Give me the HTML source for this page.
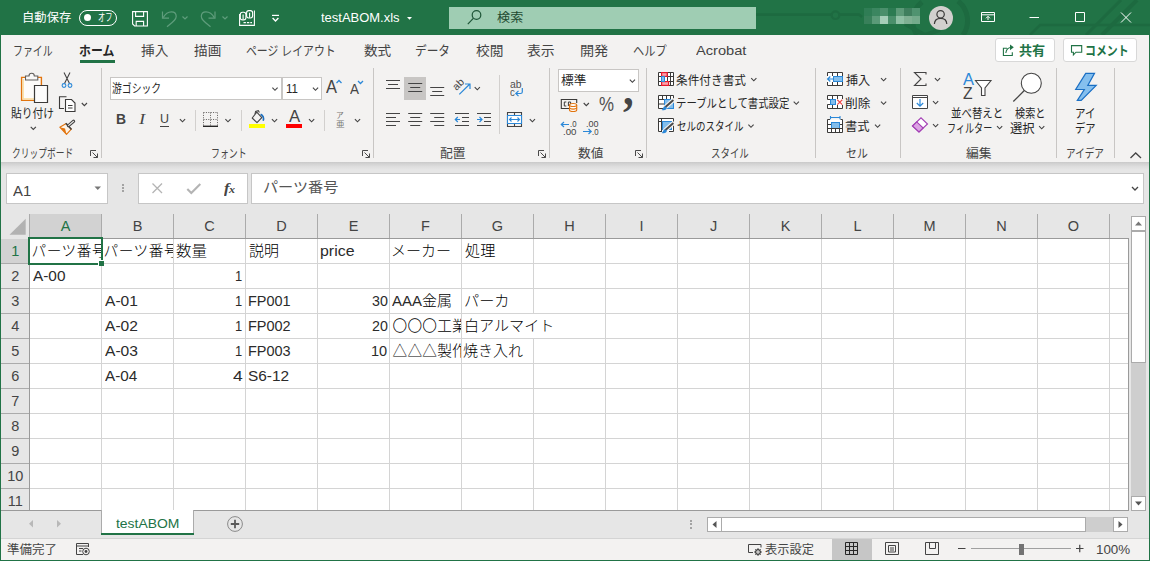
<!DOCTYPE html>
<html lang="ja"><head><meta charset="utf-8"><title>testABOM.xls - Excel</title><style>
*{margin:0;padding:0;box-sizing:border-box}
html,body{width:1150px;height:561px;overflow:hidden;background:#e6e6e6}
body{position:relative;font-family:"Liberation Sans","Noto Sans CJK JP",sans-serif;color:#262626}
.a{position:absolute}
.t{position:absolute;white-space:nowrap;transform-origin:0 50%;display:block}
svg{position:absolute;overflow:visible}
</style></head><body>
<div class="a" style="left:0px;top:0px;width:1150px;height:561px;background:#217346;"></div>
<div class="a" style="left:1px;top:35px;width:1148px;height:127px;background:#f3f2f1;"></div>
<div class="a" style="left:1px;top:162px;width:1148px;height:349px;background:#e6e6e6;"></div>
<div class="a" style="left:1px;top:162px;width:1148px;height:8px;background:linear-gradient(#c9c9c9,#d2d2d2 22%,#dddddd 55%,#e6e6e6)"></div>
<div class="a" style="left:1px;top:511px;width:1148px;height:27px;background:#e6e6e6;"></div>
<div class="a" style="left:1px;top:538px;width:1148px;height:1px;background:#d4d4d4;"></div>
<div class="a" style="left:1px;top:539px;width:1148px;height:21px;background:#f3f2f1;"></div>
<div class="a" style="left:0;top:0;width:1150px;height:35px;overflow:hidden">
<svg style="left:0px;top:0px" width="1150" height="35" viewBox="0 0 1150 35">
<g fill="none" stroke="#1d6a40" stroke-width="2.6">
<path d="M756 14.6 H831"/><circle cx="835.5" cy="15.2" r="3.8" stroke-width="2.2"/><path d="M840 14.6 H859 L862 17"/>
<path d="M917 35 A 25 25 0 0 1 922 2" stroke-width="5"/><path d="M958 1 A 25 25 0 0 1 963 35" stroke-width="5"/>
<path d="M905 24 L925 35 M925 35 L940 30" stroke-width="4"/>
<path d="M1030 35 L1040 25 H1150"/>
<path d="M1102 35 L1137 0" stroke-width="4"/>
<path d="M1086 35 L1121 0" stroke-width="3"/>
</g></svg>
</div>
<div class="a" style="left:449px;top:7px;width:307px;height:22px;background:#9fcdb3;"></div>
<svg style="left:0px;top:0px" width="1" height="1" viewBox="0 0 1 1"><circle cx="476.5" cy="15" r="4.3" fill="none" stroke="#1e5537" stroke-width="1.2"/><path d="M473.3 18.3 L467.8 24.2" stroke="#1e5537" stroke-width="1.2"/></svg>
<div class="a" style="left:79px;top:9.5px;width:38px;height:16px;border:1px solid #fff;border-radius:8px"></div>
<div class="a" style="left:83.5px;top:14px;width:7px;height:7px;border-radius:50%;background:#fff"></div>
<svg style="left:0px;top:0px" width="1" height="1" viewBox="0 0 1 1"><g fill="none" stroke="#fff" stroke-width="1.1"><path d="M132.6 11.6 H147.4 V26 H134.6 L132.6 24 Z"/><path d="M135.6 11.6 V16.4 H143.6 V11.6"/><path d="M136.2 26 V21.4 H143.6 V26"/></g></svg>
<svg style="left:0px;top:0px" width="1" height="1" viewBox="0 0 1 1"><g fill="none" stroke="#5f9d7c" stroke-width="1.2"><path d="M162.5 11.5 V18.2 H169"/><path d="M163.2 17.6 C165.5 13.5 169 11.9 171.5 11.9 C174.5 11.9 176.2 14 176.2 16.5 C176.2 19 174.5 20.5 167 26.8"/><path d="M182.5 16.5 L185 19 L187.5 16.5"/></g></svg>
<svg style="left:0px;top:0px" width="1" height="1" viewBox="0 0 1 1"><g fill="none" stroke="#5f9d7c" stroke-width="1.2"><path d="M215 11.5 V18.2 H208.5"/><path d="M214.3 17.6 C212 13.5 208.5 11.9 206 11.9 C203 11.9 201.3 14 201.3 16.5 C201.3 19 203 20.5 210.5 26.8"/><path d="M222.5 16.5 L225 19 L227.5 16.5"/></g></svg>
<svg style="left:0px;top:0px" width="1" height="1" viewBox="0 0 1 1"><g fill="none" stroke="#fff" stroke-width="1.1"><path d="M239.6 14 V25.4 H254.4 V10.5"/><path d="M243.5 22.6 H252" stroke-dasharray="2.4 1"/><rect x="240.3" y="12.3" width="5.6" height="7.6" rx="2.2"/><rect x="246.6" y="10.6" width="6" height="7.4" rx="2.2"/><path d="M243.1 14.5 V19.5 M249.6 12.8 V17.8"/></g></svg>
<svg style="left:0px;top:0px" width="1" height="1" viewBox="0 0 1 1"><path d="M272 15.4 H279" stroke="#fff" stroke-width="1.2"/><path d="M272.6 18 L275.5 20.9 L278.4 18" fill="none" stroke="#fff" stroke-width="1.4"/></svg>
<svg style="left:0px;top:0px" width="1" height="1" viewBox="0 0 1 1"><path d="M407 17 H412 L409.5 19.8 Z" fill="#fff"/></svg>
<div class="a" style="left:864px;top:8px;width:8px;height:8px;background:#2f7d55;"></div>
<div class="a" style="left:872px;top:8px;width:8px;height:8px;background:#3b8660;"></div>
<div class="a" style="left:880px;top:8px;width:8px;height:8px;background:#4a8f6b;"></div>
<div class="a" style="left:888px;top:8px;width:8px;height:8px;background:#2c7b52;"></div>
<div class="a" style="left:896px;top:8px;width:8px;height:8px;background:#5c9a78;"></div>
<div class="a" style="left:904px;top:8px;width:8px;height:8px;background:#3f7f5e;"></div>
<div class="a" style="left:912px;top:8px;width:8px;height:8px;background:#4f9370;"></div>
<div class="a" style="left:864px;top:16px;width:8px;height:8px;background:#38805a;"></div>
<div class="a" style="left:872px;top:16px;width:8px;height:8px;background:#5a9a78;"></div>
<div class="a" style="left:880px;top:16px;width:8px;height:8px;background:#a5ceb8;"></div>
<div class="a" style="left:888px;top:16px;width:8px;height:8px;background:#4a8f6b;"></div>
<div class="a" style="left:896px;top:16px;width:8px;height:8px;background:#8fc0a5;"></div>
<div class="a" style="left:904px;top:16px;width:8px;height:8px;background:#7fb093;"></div>
<div class="a" style="left:912px;top:16px;width:8px;height:8px;background:#74ab8c;"></div>
<div class="a" style="left:928.6px;top:5.5px;width:24px;height:24px;border-radius:50%;background:#d2d0ce"></div>
<svg style="left:0px;top:0px" width="1" height="1" viewBox="0 0 1 1"><g fill="none" stroke="#3b3a39" stroke-width="1.2"><circle cx="940.6" cy="14.3" r="3.7"/><path d="M934.4 24 C934.6 19.2 937.6 18.3 940.6 18.3 C943.6 18.3 946.6 19.2 946.8 24"/></g></svg>
<svg style="left:0px;top:0px" width="1" height="1" viewBox="0 0 1 1"><g fill="none" stroke="#fff" stroke-width="1"><path d="M981.5 12.5 H994.5 V21.5 H981.5 Z"/><path d="M981.5 14.8 H994.5"/><path d="M988 20 V16.5 M986 18.3 L988 16.3 L990 18.3"/></g></svg>
<svg style="left:0px;top:0px" width="1" height="1" viewBox="0 0 1 1"><g fill="none" stroke="#fff" stroke-width="1"><path d="M1029.5 17.5 H1039"/><path d="M1075.5 12.5 H1084.5 V21.5 H1075.5 Z"/><path d="M1121 12.5 L1131 22.5 M1131 12.5 L1121 22.5"/></g></svg>
<div class="a" style="left:80px;top:59.5px;width:35px;height:3px;background:#217346;"></div>
<div class="a" style="left:995px;top:38px;width:60px;height:24px;background:#fff;border:1px solid #d8d8d8;border-radius:3px"></div>
<div class="a" style="left:1063px;top:38px;width:74px;height:24px;background:#fff;border:1px solid #d8d8d8;border-radius:3px"></div>
<svg style="left:0px;top:0px" width="1" height="1" viewBox="0 0 1 1"><g fill="none" stroke="#217346" stroke-width="1.1"><path d="M1007 48.2 H1003.4 V55.5 H1012.3 V52.3"/><path d="M1005.8 53 C1006.3 49 1008.8 47.3 1012.3 47.3"/><path d="M1010 44.4 L1013.8 47.3 L1010 50.2 Z" fill="#217346" stroke="none"/></g></svg>
<svg style="left:0px;top:0px" width="1" height="1" viewBox="0 0 1 1"><path d="M1071.5 45.6 H1081.7 V52.2 H1076 L1073.4 54.9 V52.2 H1071.5 Z" fill="none" stroke="#217346" stroke-width="1.1"/></svg>
<div class="a" style="left:101.0px;top:68px;width:1px;height:90px;background:#c8c6c4;"></div>
<div class="a" style="left:373.0px;top:68px;width:1px;height:90px;background:#c8c6c4;"></div>
<div class="a" style="left:549.0px;top:68px;width:1px;height:90px;background:#c8c6c4;"></div>
<div class="a" style="left:646.0px;top:68px;width:1px;height:90px;background:#c8c6c4;"></div>
<div class="a" style="left:815.0px;top:68px;width:1px;height:90px;background:#c8c6c4;"></div>
<div class="a" style="left:900.0px;top:68px;width:1px;height:90px;background:#c8c6c4;"></div>
<div class="a" style="left:1056.0px;top:68px;width:1px;height:90px;background:#c8c6c4;"></div>
<div class="a" style="left:1114.0px;top:68px;width:1px;height:90px;background:#c8c6c4;"></div>
<div class="a" style="left:195.0px;top:110px;width:1px;height:21px;background:#d2d0ce;"></div>
<div class="a" style="left:240.5px;top:110px;width:1px;height:21px;background:#d2d0ce;"></div>
<div class="a" style="left:324.0px;top:110px;width:1px;height:21px;background:#d2d0ce;"></div>
<div class="a" style="left:499.0px;top:75px;width:1px;height:59px;background:#d2d0ce;"></div>
<svg style="left:0px;top:0px" width="1" height="1" viewBox="0 0 1 1"><g fill="none" stroke="#4a4a4a" stroke-width="1"><path d="M90.5 156.0 V150.5 H96"/><path d="M92.5 152.5 L97.5 157.5 M97.5 153.5 V157.5 H93.5"/></g></svg>
<svg style="left:0px;top:0px" width="1" height="1" viewBox="0 0 1 1"><g fill="none" stroke="#4a4a4a" stroke-width="1"><path d="M362.5 156.0 V150.5 H368"/><path d="M364.5 152.5 L369.5 157.5 M369.5 153.5 V157.5 H365.5"/></g></svg>
<svg style="left:0px;top:0px" width="1" height="1" viewBox="0 0 1 1"><g fill="none" stroke="#4a4a4a" stroke-width="1"><path d="M538.5 156.0 V150.5 H544"/><path d="M540.5 152.5 L545.5 157.5 M545.5 153.5 V157.5 H541.5"/></g></svg>
<svg style="left:0px;top:0px" width="1" height="1" viewBox="0 0 1 1"><g fill="none" stroke="#4a4a4a" stroke-width="1"><path d="M635.5 156.0 V150.5 H641"/><path d="M637.5 152.5 L642.5 157.5 M642.5 153.5 V157.5 H638.5"/></g></svg>
<svg style="left:0px;top:0px" width="1" height="1" viewBox="0 0 1 1"><path d="M1130.5 158 L1135.7 153 L1141 158" fill="none" stroke="#444" stroke-width="1.3"/></svg>
<svg style="left:0px;top:0px" width="1" height="1" viewBox="0 0 1 1"><g fill="none" stroke-width="1.2">
<path d="M21.6 77.4 H41.4 V100.4 H21.6 Z" stroke="#e2740e" fill="#fdfcfa" stroke-width="1.4"/>
<path d="M23.2 79 V98.9 H34" stroke="#fbdc9a" stroke-width="1.2"/>
<path d="M25.5 80 V76 H29 C29 72.3 34.3 72.3 34.3 76 H37.8 V80 Z" stroke="#605e5c" fill="#f8f8f8" stroke-width="1.1"/>
<path d="M34.5 85.5 H47.5 V102.5 H34.5 Z" stroke="#3b3a39" fill="#fcfcfc"/></g></svg>
<svg style="left:0px;top:0px" width="1" height="1" viewBox="0 0 1 1"><path d="M30.699999999999996 126.89999999999999 L33.3 129.5 L35.9 126.89999999999999" fill="none" stroke="#444" stroke-width="1.15"/></svg>
<svg style="left:0px;top:0px" width="1" height="1" viewBox="0 0 1 1"><g fill="none" stroke-width="1.1"><path d="M64 72.5 L69.5 83.5 M70 72.5 L64.5 83.5" stroke="#444"/>
<circle cx="64" cy="85.5" r="1.9" stroke="#2b88d8"/><circle cx="70" cy="85.5" r="1.9" stroke="#2b88d8"/></g></svg>
<svg style="left:0px;top:0px" width="1" height="1" viewBox="0 0 1 1"><g fill="none" stroke="#3b3a39" stroke-width="1.1"><path d="M64 108.5 H59.5 V96.8 H66.5"/>
<path d="M65.5 99.5 H71.5 L75 103 V111.5 H65.5 Z" fill="#fff"/><path d="M68 105.5 H72.5 M68 108 H72.5"/></g></svg>
<svg style="left:0px;top:0px" width="1" height="1" viewBox="0 0 1 1"><path d="M81.80000000000001 103.0 L84.4 105.6 L87.00000000000001 103.0" fill="none" stroke="#444" stroke-width="1.15"/></svg>
<svg style="left:0px;top:0px" width="1" height="1" viewBox="0 0 1 1"><g fill="none" stroke-width="1.1"><path d="M59.8 127.2 L66.2 123.5 L71.3 129.2 L66.5 134.3 Z" stroke="#e2740e" fill="#fdf3e6" stroke-linejoin="round"/>
<path d="M59.8 127.2 L66.5 134.3 L65 128.5 Z" fill="#e2740e"/>
<path d="M65.8 123.2 L71.5 129.5" stroke="#444" stroke-width="1.6"/>
<path d="M68.5 125.6 L73.6 121.2" stroke="#444" stroke-width="3.2" stroke-linecap="round"/><path d="M68.7 125.4 L73.4 121.4" stroke="#f3f2f1" stroke-width="1.2" stroke-linecap="round"/></g></svg>
<div class="a" style="left:110px;top:77px;width:172px;height:23px;background:#fff;border:1px solid #c8c6c4"></div>
<div class="a" style="left:282px;top:77px;width:40px;height:23px;background:#fff;border:1px solid #c8c6c4;border-left:1px solid #c8c6c4"></div>
<svg style="left:0px;top:0px" width="1" height="1" viewBox="0 0 1 1"><path d="M272.4 87.7 L275 90.3 L277.59999999999997 87.7" fill="none" stroke="#444" stroke-width="1.15"/></svg>
<svg style="left:0px;top:0px" width="1" height="1" viewBox="0 0 1 1"><path d="M312.9 87.7 L315.5 90.3 L318.09999999999997 87.7" fill="none" stroke="#444" stroke-width="1.15"/></svg>
<svg style="left:0px;top:0px" width="1" height="1" viewBox="0 0 1 1"><path d="M336.5 83 L339 80.5 L341.5 83" fill="none" stroke="#2b88d8" stroke-width="1.3"/></svg>
<svg style="left:0px;top:0px" width="1" height="1" viewBox="0 0 1 1"><path d="M358 81 L360.5 83.5 L363 81" fill="none" stroke="#2b88d8" stroke-width="1.3"/></svg>
<div class="a" style="left:160px;top:125.5px;width:9px;height:1px;background:#444;"></div>
<svg style="left:0px;top:0px" width="1" height="1" viewBox="0 0 1 1"><path d="M179.9 119.2 L182.5 121.8 L185.1 119.2" fill="none" stroke="#444" stroke-width="1.15"/></svg>
<svg style="left:0px;top:0px" width="1" height="1" viewBox="0 0 1 1"><g fill="none" stroke="#605e5c" stroke-width="1" stroke-dasharray="1 1.4"><path d="M203.5 112.5 H217.5 M203.5 112.5 V126 M217.5 112.5 V126 M210.5 112.5 V126 M203.5 119.5 H217.5"/></g>
<path d="M203 126.3 H218" stroke="#262626" stroke-width="1.4"/></svg>
<svg style="left:0px;top:0px" width="1" height="1" viewBox="0 0 1 1"><path d="M225.4 119.2 L228 121.8 L230.6 119.2" fill="none" stroke="#444" stroke-width="1.15"/></svg>
<svg style="left:0px;top:0px" width="1" height="1" viewBox="0 0 1 1"><g fill="none" stroke="#444" stroke-width="1.1"><path d="M256.8 112.2 L261.8 117.6 L257 122.6 L252.2 118 Z" stroke-linejoin="round"/><path d="M255 114 L255.6 111.4 L258.3 110.6 L259.4 112.6"/></g>
<path d="M260.6 114.3 C263.2 115.6 264 118 263.2 120.8" fill="none" stroke="#1e6fbd" stroke-width="1.6"/></svg>
<div class="a" style="left:249px;top:124px;width:16px;height:4px;background:#ffff00;"></div>
<svg style="left:0px;top:0px" width="1" height="1" viewBox="0 0 1 1"><path d="M271.9 119.2 L274.5 121.8 L277.09999999999997 119.2" fill="none" stroke="#444" stroke-width="1.15"/></svg>
<div class="a" style="left:286px;top:124px;width:16px;height:4px;background:#ff0000;"></div>
<svg style="left:0px;top:0px" width="1" height="1" viewBox="0 0 1 1"><path d="M309.0 119.2 L311.6 121.8 L314.2 119.2" fill="none" stroke="#444" stroke-width="1.15"/></svg>
<svg style="left:0px;top:0px" width="1" height="1" viewBox="0 0 1 1"><path d="M354.9 119.2 L357.5 121.8 L360.09999999999997 119.2" fill="none" stroke="#444" stroke-width="1.15"/></svg>
<div class="a" style="left:404px;top:77px;width:22px;height:23px;background:#c8c6c4;"></div>
<svg style="left:0px;top:0px" width="1" height="1" viewBox="0 0 1 1"><path d="M386.0 80.5 H400.0 M388.0 84.5 H398.0 M386.0 88.5 H400.0 " stroke="#444" stroke-width="1.1" fill="none"/></svg>
<svg style="left:0px;top:0px" width="1" height="1" viewBox="0 0 1 1"><path d="M408.2 83.5 H422.2 M410.2 87.5 H420.2 M408.2 91.5 H422.2 " stroke="#444" stroke-width="1.1" fill="none"/></svg>
<svg style="left:0px;top:0px" width="1" height="1" viewBox="0 0 1 1"><path d="M430.2 87.5 H444.2 M432.2 91.5 H442.2 M430.2 95.5 H444.2 " stroke="#444" stroke-width="1.1" fill="none"/></svg>
<svg style="left:0px;top:0px" width="1" height="1" viewBox="0 0 1 1"><path d="M386 113.5 H400 M386 117.5 H396 M386 121.5 H400 M386 125.5 H396 " stroke="#444" stroke-width="1.1" fill="none"/></svg>
<svg style="left:0px;top:0px" width="1" height="1" viewBox="0 0 1 1"><path d="M408.2 113.5 H422.2 M410.2 117.5 H420.2 M408.2 121.5 H422.2 M410.2 125.5 H420.2 " stroke="#444" stroke-width="1.1" fill="none"/></svg>
<svg style="left:0px;top:0px" width="1" height="1" viewBox="0 0 1 1"><path d="M430.2 113.5 H444.2 M434.2 117.5 H444.2 M430.2 121.5 H444.2 M434.2 125.5 H444.2 " stroke="#444" stroke-width="1.1" fill="none"/></svg>
<span class="a" style="white-space:nowrap;left:451.9px;top:77.8px;font-size:10.5px;line-height:12px;color:#444;transform:rotate(-45deg);transform-origin:50% 50%">ab</span>
<svg style="left:0px;top:0px" width="1" height="1" viewBox="0 0 1 1"><path d="M459.3 94.4 L469.6 84.3 M465 84 H470 V89" fill="none" stroke="#2b88d8" stroke-width="1.2"/></svg>
<svg style="left:0px;top:0px" width="1" height="1" viewBox="0 0 1 1"><path d="M474.7 87.2 L477.3 89.8 L479.9 87.2" fill="none" stroke="#444" stroke-width="1.15"/></svg>
<svg style="left:0px;top:0px" width="1" height="1" viewBox="0 0 1 1"><path d="M522.3 88 V92 C522.3 93 521.5 93.5 520.5 93.5 H516 M518.5 90.8 L515.8 93.5 L518.5 96.2" fill="none" stroke="#2b88d8" stroke-width="1.2"/></svg>
<svg style="left:0px;top:0px" width="1" height="1" viewBox="0 0 1 1"><path d="M455 113.5 H469 M462 117.5 H469 M462 121.5 H469 M455 125.5 H469" stroke="#444" stroke-width="1.1" fill="none"/>
<path d="M460 119.5 H455.5 M457.8 117 L455.3 119.5 L457.8 122" stroke="#2b88d8" stroke-width="1.2" fill="none"/></svg>
<svg style="left:0px;top:0px" width="1" height="1" viewBox="0 0 1 1"><path d="M477 113.5 H491 M484 117.5 H491 M484 121.5 H491 M477 125.5 H491" stroke="#444" stroke-width="1.1" fill="none"/>
<path d="M477 119.5 H481.8 M479.5 117 L482 119.5 L479.5 122" stroke="#2b88d8" stroke-width="1.2" fill="none"/></svg>
<svg style="left:0px;top:0px" width="1" height="1" viewBox="0 0 1 1"><g fill="none" stroke-width="1.1"><path d="M507.5 112.5 H521.5 V126.5 H507.5 Z M507.5 115.5 H521.5 M507.5 123.5 H521.5 M514.5 112.5 V115.5 M514.5 123.5 V126.5" stroke="#444"/>
<path d="M507.5 115.5 H521.5 V123.5 H507.5 Z" stroke="#2b88d8" fill="#fff"/>
<path d="M509.5 119.5 H519.5 M511.5 117.5 L509.5 119.5 L511.5 121.5 M517.5 117.5 L519.5 119.5 L517.5 121.5" stroke="#2b88d8"/></g></svg>
<svg style="left:0px;top:0px" width="1" height="1" viewBox="0 0 1 1"><path d="M529.8 119.2 L532.4 121.8 L535.0 119.2" fill="none" stroke="#444" stroke-width="1.15"/></svg>
<div class="a" style="left:558px;top:69px;width:81px;height:23px;background:#fff;border:1px solid #c8c6c4"></div>
<svg style="left:0px;top:0px" width="1" height="1" viewBox="0 0 1 1"><path d="M629.8 79.7 L632.4 82.3 L635.0 79.7" fill="none" stroke="#444" stroke-width="1.15"/></svg>
<svg style="left:0px;top:0px" width="1" height="1" viewBox="0 0 1 1"><g fill="none" stroke-width="1.1"><path d="M569 108.5 H561.3 V99.5 H576.7 V103" stroke="#3b3a39"/>
<path d="M566.3 102 H564.3 V106 H566.3 M570.6 106 V102 H568.4 V106" stroke="#3b3a39" stroke-width="1"/>
<path d="M569.5 105 C569.5 103 576.7 103 576.7 105 V110 C576.7 112 569.5 112 569.5 110 Z" stroke="#e2740e" fill="#fff"/>
<path d="M569.5 105 C569.5 107 576.7 107 576.7 105 M569.5 107.6 C569.5 109.6 576.7 109.6 576.7 107.6" stroke="#e2740e"/></g></svg>
<svg style="left:0px;top:0px" width="1" height="1" viewBox="0 0 1 1"><path d="M583.6999999999999 103.0 L586.3 105.6 L588.9 103.0" fill="none" stroke="#444" stroke-width="1.15"/></svg>
<svg style="left:0px;top:0px" width="1" height="1" viewBox="0 0 1 1"><path d="M569 124.5 H561.5 M564 122 L561.3 124.5 L564 127" fill="none" stroke="#2b88d8" stroke-width="1.2"/></svg>
<svg style="left:0px;top:0px" width="1" height="1" viewBox="0 0 1 1"><path d="M583 131.5 H591 M588.5 129 L591.2 131.5 L588.5 134" fill="none" stroke="#2b88d8" stroke-width="1.2"/></svg>
<svg style="left:0px;top:0px" width="1" height="1" viewBox="0 0 1 1"><rect x="658.5" y="72.5" width="15" height="13" fill="#fff"/>
<g fill="none" stroke="#3b3a39" stroke-width="1"><path d="M658.5 72.5 H673.5 V85.5 H658.5 Z M661.5 72.5 V85.5 M658.5 76.5 H673.5 M658.5 81.5 H673.5 M667.5 72.5 V85.5 M670.5 72.5 V85.5"/></g>
<rect x="661.6" y="72.6" width="5.6" height="3.8" fill="#f9a3ab" stroke="#e8192c" stroke-width="1.2"/><rect x="661.6" y="81.6" width="7" height="3.8" fill="#f9a3ab" stroke="#e8192c" stroke-width="1.2"/>
<rect x="661.5" y="76.5" width="3" height="5" fill="#83beec" stroke="#2b88d8" stroke-width="1"/></svg>
<svg style="left:0px;top:0px" width="1" height="1" viewBox="0 0 1 1"><path d="M751.1999999999999 78.2 L753.8 80.8 L756.4 78.2" fill="none" stroke="#444" stroke-width="1.15"/></svg>
<svg style="left:0px;top:0px" width="1" height="1" viewBox="0 0 1 1"><rect x="658.5" y="95.5" width="15" height="13" fill="#fff"/>
<g fill="none" stroke="#3b3a39" stroke-width="1"><path d="M663 108.5 H658.5 V95.5 H673.5 V98.5 M658.5 99.5 H664 M658.5 104 H664 M662.5 95.5 V99 M666.5 95.5 V99 M670.5 95.5 V99"/></g>
<rect x="664.5" y="99.5" width="9" height="9" fill="#83beec" stroke="#2b88d8"/><path d="M664.8 107.6 L672.8 100.6" stroke="#f3f2f1" stroke-width="4.2" stroke-linecap="round"/><path d="M665.2 107.3 L672.8 100.6" stroke="#4a4a4a" stroke-width="2" stroke-linecap="round"/><path d="M661.6 109.9 C663 109.5 663 106.8 665 106.6 C667 106.6 667.4 108.6 666 109.6 C664.8 110.4 663 110.3 661.6 109.9 Z" fill="#2b88d8"/></svg>
<svg style="left:0px;top:0px" width="1" height="1" viewBox="0 0 1 1"><path d="M793.6999999999999 101.7 L796.3 104.3 L798.9 101.7" fill="none" stroke="#444" stroke-width="1.15"/></svg>
<svg style="left:0px;top:0px" width="1" height="1" viewBox="0 0 1 1"><rect x="658.5" y="118.5" width="15" height="13" fill="#fff"/>
<g fill="none" stroke="#3b3a39" stroke-width="1"><path d="M662 131.5 H658.5 V118.5 H673.5 V131.5 H669 M658.5 121.5 H662 M661.5 118.5 V131.5"/></g>
<rect x="662.5" y="121.5" width="9" height="8" fill="#83beec" stroke="#2b88d8"/><path d="M664.8 130.6 L672.8 123.6" stroke="#f3f2f1" stroke-width="4.2" stroke-linecap="round"/><path d="M665.2 130.3 L672.8 123.6" stroke="#4a4a4a" stroke-width="2" stroke-linecap="round"/><path d="M661.6 132.9 C663 132.5 663 129.8 665 129.6 C667 129.6 667.4 131.6 666 132.6 C664.8 133.4 663 133.3 661.6 132.9 Z" fill="#2b88d8"/></svg>
<svg style="left:0px;top:0px" width="1" height="1" viewBox="0 0 1 1"><path d="M748.4 124.7 L751 127.3 L753.6 124.7" fill="none" stroke="#444" stroke-width="1.15"/></svg>
<svg style="left:0px;top:0px" width="1" height="1" viewBox="0 0 1 1"><rect x="827.5" y="72.5" width="15" height="13" fill="#fff"/><rect x="833.5" y="76.5" width="9" height="5" fill="#83beec" stroke="#2b88d8"/>
<g fill="none" stroke="#3b3a39" stroke-width="1"><path d="M827.5 76 V72.5 H842.5 V76 M827.5 82 V85.5 H842.5 V82 M832.5 72.5 V76 M837.5 72.5 V76 M832.5 82 V85.5 M837.5 82 V85.5"/></g>
<path d="M834 79 H827.8 M830.3 76.5 L827.6 79 L830.3 81.5" fill="none" stroke="#2b88d8" stroke-width="1.2"/></svg>
<svg style="left:0px;top:0px" width="1" height="1" viewBox="0 0 1 1"><path d="M881.0 78.2 L883.6 80.8 L886.2 78.2" fill="none" stroke="#444" stroke-width="1.15"/></svg>
<svg style="left:0px;top:0px" width="1" height="1" viewBox="0 0 1 1"><rect x="827.5" y="95.5" width="15" height="13" fill="#fff"/><rect x="830.5" y="99.5" width="5" height="5" fill="#83beec" stroke="#2b88d8"/>
<g fill="none" stroke="#3b3a39" stroke-width="1"><path d="M827.5 99.5 V95.5 H842.5 V99 M827.5 104.5 V108.5 H842.5 V105 M832.5 95.5 V99 M837.5 95.5 V99 M832.5 105 V108.5 M837.5 105 V108.5 M827.5 99.5 H830 M827.5 104.5 H830"/></g>
<path d="M837.3 99.8 L842.3 104.6 M842.3 99.8 L837.3 104.6" fill="none" stroke="#f04a4a" stroke-width="1.2"/></svg>
<svg style="left:0px;top:0px" width="1" height="1" viewBox="0 0 1 1"><path d="M881.0 101.7 L883.6 104.3 L886.2 101.7" fill="none" stroke="#444" stroke-width="1.15"/></svg>
<svg style="left:0px;top:0px" width="1" height="1" viewBox="0 0 1 1"><rect x="827.5" y="119.5" width="15" height="13" fill="#fff"/><rect x="831.5" y="122.5" width="8" height="6" fill="#83beec" stroke="#2b88d8"/>
<g fill="none" stroke="#3b3a39" stroke-width="1"><path d="M830 119.5 H827.5 V132.5 H842.5 V119.5 H840.5 M827.5 128.5 H842.5 M831.5 128.5 V132.5 M835.5 128.5 V132.5 M839.5 128.5 V132.5 M827.5 124.5 H831 M840 124.5 H842.5"/></g>
<path d="M830.5 117.5 H840 M830.5 116 V119.3 M840 116 V119.3" fill="none" stroke="#2b88d8" stroke-width="1.1"/></svg>
<svg style="left:0px;top:0px" width="1" height="1" viewBox="0 0 1 1"><path d="M875.0 124.7 L877.6 127.3 L880.2 124.7" fill="none" stroke="#444" stroke-width="1.15"/></svg>
<svg style="left:0px;top:0px" width="1" height="1" viewBox="0 0 1 1"><path d="M926 74.5 V72.5 H914.5 L921 79 L914.5 85.5 H926 V83.5" fill="none" stroke="#444" stroke-width="1.1"/></svg>
<svg style="left:0px;top:0px" width="1" height="1" viewBox="0 0 1 1"><path d="M934.9 78.2 L937.5 80.8 L940.1 78.2" fill="none" stroke="#444" stroke-width="1.15"/></svg>
<svg style="left:0px;top:0px" width="1" height="1" viewBox="0 0 1 1"><path d="M912.5 95.5 H927.5 V108.5 H912.5 Z" fill="#fff" stroke="#444" stroke-width="1"/><path d="M912.5 97.5 H927.5" stroke="#444"/>
<path d="M920 99 V106 M916.8 103 L920 106.2 L923.2 103" fill="none" stroke="#2b88d8" stroke-width="1.2"/></svg>
<svg style="left:0px;top:0px" width="1" height="1" viewBox="0 0 1 1"><path d="M933.0 101.2 L935.6 103.8 L938.2 101.2" fill="none" stroke="#444" stroke-width="1.15"/></svg>
<svg style="left:0px;top:0px" width="1" height="1" viewBox="0 0 1 1"><path d="M912.5 126 L921 117.8 L927.5 124 L919 132 Z" fill="#fff" stroke="#a33fb5" stroke-width="1.1"/>
<path d="M912.5 126 L916.8 121.9 L923.2 128 L919 132 Z" fill="#dca3e4" stroke="#a33fb5" stroke-width="1.1"/></svg>
<svg style="left:0px;top:0px" width="1" height="1" viewBox="0 0 1 1"><path d="M933.0 124.2 L935.6 126.8 L938.2 124.2" fill="none" stroke="#444" stroke-width="1.15"/></svg>
<svg style="left:0px;top:0px" width="1" height="1" viewBox="0 0 1 1"><path d="M975.5 80.5 H991 L985 88 V95.5 H981.5 V88 Z" fill="#fff" stroke="#444" stroke-width="1.1"/></svg>
<svg style="left:0px;top:0px" width="1" height="1" viewBox="0 0 1 1"><path d="M997.0 126.2 L999.6 128.8 L1002.2 126.2" fill="none" stroke="#444" stroke-width="1.15"/></svg>
<svg style="left:0px;top:0px" width="1" height="1" viewBox="0 0 1 1"><circle cx="1031.3" cy="83.3" r="10" fill="#fff" stroke="#444" stroke-width="1.1"/><path d="M1024.3 90.5 L1013.3 101.5" stroke="#444" stroke-width="1.2"/></svg>
<svg style="left:0px;top:0px" width="1" height="1" viewBox="0 0 1 1"><path d="M1039.1000000000001 126.2 L1041.7 128.8 L1044.3000000000002 126.2" fill="none" stroke="#444" stroke-width="1.15"/></svg>
<svg style="left:0px;top:0px" width="1" height="1" viewBox="0 0 1 1"><path d="M1085.7 73.4 H1094.5 L1087.8 85.4 H1096.2 L1081.2 100.4 H1077.3 L1084.3 89.5 H1075.7 Z" fill="#85bfee" stroke="#1a6fc4" stroke-width="1.2" stroke-linejoin="miter"/></svg>
<div class="a" style="left:6px;top:173px;width:102px;height:31px;background:#fff;border:1px solid #c6c6c6"></div>
<svg style="left:0px;top:0px" width="1" height="1" viewBox="0 0 1 1"><path d="M94.5 186.5 H101 L97.75 190 Z" fill="#777"/></svg>
<div class="a" style="left:122px;top:184px;width:2px;height:2px;background:#a3a3a3;"></div>
<div class="a" style="left:122px;top:187.2px;width:2px;height:2px;background:#a3a3a3;"></div>
<div class="a" style="left:122px;top:190.4px;width:2px;height:2px;background:#a3a3a3;"></div>
<div class="a" style="left:138px;top:173px;width:110px;height:31px;background:#fff;border:1px solid #c6c6c6"></div>
<svg style="left:0px;top:0px" width="1" height="1" viewBox="0 0 1 1"><path d="M152.5 183.5 L162 193 M162 183.5 L152.5 193" fill="none" stroke="#b4b4b4" stroke-width="1.3"/></svg>
<svg style="left:0px;top:0px" width="1" height="1" viewBox="0 0 1 1"><path d="M187.3 189 L191.3 193 L200.3 184" fill="none" stroke="#b4b4b4" stroke-width="2.1"/></svg>
<div class="a" style="left:251px;top:173px;width:893px;height:31px;background:#fff;border:1px solid #c6c6c6"></div>
<svg style="left:0px;top:0px" width="1" height="1" viewBox="0 0 1 1"><path d="M1132.0 187.0 L1135 190.0 L1138.0 187.0" fill="none" stroke="#444" stroke-width="1.3"/></svg>
<div class="a" style="left:29px;top:238px;width:1099px;height:272px;background:#fff;"></div>
<svg style="left:0px;top:0px" width="1" height="1" viewBox="0 0 1 1"><path d="M25.7 218.7 V234.7 H9.5 Z" fill="#b2b2b2"/></svg>
<div class="a" style="left:30px;top:214px;width:72px;height:24px;background:#d2d2d2;"></div>
<div class="a" style="left:1px;top:239px;width:28px;height:25px;background:#d2d2d2;"></div>
<svg style="left:0px;top:0px" width="1" height="1" viewBox="0 0 1 1"><path d="M101.5 239 V510 M173.5 239 V510 M245.5 239 V510 M317.5 239 V510 M389.5 239 V510 M461.5 239 V510 M533.5 239 V510 M605.5 239 V510 M677.5 239 V510 M749.5 239 V510 M821.5 239 V510 M893.5 239 V510 M965.5 239 V510 M1037.5 239 V510 M1109.5 239 V510 M30 263.5 H1128 M30 288.5 H1128 M30 313.5 H1128 M30 338.5 H1128 M30 363.5 H1128 M30 388.5 H1128 M30 413.5 H1128 M30 438.5 H1128 M30 463.5 H1128 M30 488.5 H1128 " stroke="#d4d4d4" stroke-width="1" fill="none"/></svg>
<svg style="left:0px;top:0px" width="1" height="1" viewBox="0 0 1 1"><path d="M29.5 214 V238 M101.5 214 V238 M173.5 214 V238 M245.5 214 V238 M317.5 214 V238 M389.5 214 V238 M461.5 214 V238 M533.5 214 V238 M605.5 214 V238 M677.5 214 V238 M749.5 214 V238 M821.5 214 V238 M893.5 214 V238 M965.5 214 V238 M1037.5 214 V238 M1109.5 214 V238 M1 263.5 H29 M1 288.5 H29 M1 313.5 H29 M1 338.5 H29 M1 363.5 H29 M1 388.5 H29 M1 413.5 H29 M1 438.5 H29 M1 463.5 H29 M1 488.5 H29 " stroke="#ababab" stroke-width="1" fill="none"/></svg>
<div class="a" style="left:29px;top:238px;width:1100px;height:1px;background:#9a9a9a;"></div>
<div class="a" style="left:29px;top:238px;width:1px;height:272px;background:#9a9a9a;"></div>
<div class="a" style="left:1128px;top:238px;width:1px;height:273px;background:#9a9a9a;"></div>
<div class="a" style="left:1px;top:510px;width:1128px;height:1px;background:#9a9a9a;"></div>
<span class="a" style="left:30px;top:240px;width:71px;height:22px;line-height:22px;font-size:14.67px;font-weight:300;color:#000;white-space:nowrap;overflow:hidden;padding-left:1.6px;letter-spacing:0.5px">パーツ番号</span>
<span class="a" style="left:102px;top:240px;width:71px;height:22px;line-height:22px;font-size:14.67px;font-weight:300;color:#000;white-space:nowrap;overflow:hidden;padding-left:1.6px;letter-spacing:0.5px">パーツ番号</span>
<span class="a" style="left:390px;top:315px;width:71px;height:22px;line-height:22px;font-size:14.67px;font-weight:300;color:#000;white-space:nowrap;overflow:hidden;padding-left:2.6px;letter-spacing:0.2px">〇〇〇工業</span>
<div class="a" style="left:533px;top:314px;width:1px;height:24px;background:#fff;"></div>
<span class="a" style="left:390px;top:340px;width:71px;height:22px;line-height:22px;font-size:14.67px;font-weight:300;color:#000;white-space:nowrap;overflow:hidden;padding-left:2.6px;letter-spacing:0.2px">△△△製作</span>
<div class="a" style="left:28px;top:237px;width:75px;height:28px;border:2px solid #217346"></div>
<div class="a" style="left:98px;top:260px;width:6px;height:6px;background:#217346;border:1px solid #fff;border-right:0;border-bottom:0"></div>
<div class="a" style="left:1131px;top:216px;width:15px;height:15px;background:#fff;border:1px solid #ababab"></div>
<svg style="left:0px;top:0px" width="1" height="1" viewBox="0 0 1 1"><path d="M1135 225.5 H1142 L1138.5 221.5 Z" fill="#777"/></svg>
<div class="a" style="left:1131px;top:231px;width:15px;height:266px;background:#cecece;"></div>
<div class="a" style="left:1131px;top:231px;width:15px;height:132px;background:#fff;border:1px solid #ababab"></div>
<div class="a" style="left:1131px;top:496px;width:15px;height:15px;background:#fff;border:1px solid #ababab"></div>
<svg style="left:0px;top:0px" width="1" height="1" viewBox="0 0 1 1"><path d="M1135 501.5 H1142 L1138.5 505.5 Z" fill="#555"/></svg>
<svg style="left:0px;top:0px" width="1" height="1" viewBox="0 0 1 1"><path d="M33 520 V527.5 L29 523.75 Z M57 520 V527.5 L61 523.75 Z" fill="#b8b8b8"/></svg>
<div class="a" style="left:101px;top:510px;width:93px;height:23px;background:#fff;border-left:1px solid #ababab;border-right:1px solid #ababab;"></div>
<div class="a" style="left:101px;top:533px;width:93px;height:2px;background:#217346;"></div>
<svg style="left:0px;top:0px" width="1" height="1" viewBox="0 0 1 1"><circle cx="235" cy="524" r="7.4" fill="none" stroke="#8a8a8a" stroke-width="1"/><path d="M230.8 524 H239.2 M235 519.8 V528.2" stroke="#5a5a5a" stroke-width="1.8"/></svg>
<div class="a" style="left:690px;top:519.5px;width:2px;height:2px;background:#a3a3a3;"></div>
<div class="a" style="left:690px;top:523px;width:2px;height:2px;background:#a3a3a3;"></div>
<div class="a" style="left:690px;top:526.5px;width:2px;height:2px;background:#a3a3a3;"></div>
<div class="a" style="left:707px;top:517px;width:15px;height:15px;background:#fff;border:1px solid #ababab"></div>
<svg style="left:0px;top:0px" width="1" height="1" viewBox="0 0 1 1"><path d="M716.5 521 V528 L712.5 524.5 Z" fill="#555"/></svg>
<div class="a" style="left:722px;top:517px;width:391px;height:15px;background:#cecece;"></div>
<div class="a" style="left:721px;top:517px;width:365px;height:15px;background:#fff;border:1px solid #ababab"></div>
<div class="a" style="left:1113px;top:517px;width:15px;height:15px;background:#fff;border:1px solid #ababab"></div>
<svg style="left:0px;top:0px" width="1" height="1" viewBox="0 0 1 1"><path d="M1118.5 521 V528 L1122.5 524.5 Z" fill="#555"/></svg>
<svg style="left:0px;top:0px" width="1" height="1" viewBox="0 0 1 1"><g fill="none" stroke="#444" stroke-width="1"><path d="M83 554.5 H76.5 V543.5 H88.5 V547"/><path d="M76.5 546 H88.5 M79 548.5 H83 M79 551 H81.5"/><circle cx="86" cy="551.5" r="3.3"/></g><circle cx="86" cy="551.5" r="1.4" fill="#444"/></svg>
<svg style="left:0px;top:0px" width="1" height="1" viewBox="0 0 1 1"><g fill="none" stroke="#444" stroke-width="1"><path d="M753 552.5 H748.5 V544.5 H761 V547.5"/><circle cx="758" cy="552" r="2.6"/><path d="M758 548 V556 M754 552 H762 M755.2 549.2 L760.8 554.8 M760.8 549.2 L755.2 554.8" stroke-width="0.9"/></g><circle cx="758" cy="552" r="1" fill="#f3f2f1"/></svg>
<div class="a" style="left:832px;top:539px;width:40px;height:21px;background:#c6c6c6;"></div>
<svg style="left:0px;top:0px" width="1" height="1" viewBox="0 0 1 1"><path d="M845.5 542.5 H857.5 V554.5 H845.5 Z M849.5 542.5 V554.5 M853.5 542.5 V554.5 M845.5 546.5 H857.5 M845.5 550.5 H857.5" fill="none" stroke="#262626" stroke-width="1"/></svg>
<svg style="left:0px;top:0px" width="1" height="1" viewBox="0 0 1 1"><path d="M885.5 542.5 H898.5 V554.5 H885.5 Z M888.5 545.5 H895.5 V552 H888.5 Z M890 548 H894 M890 550 H894" fill="none" stroke="#444" stroke-width="1"/></svg>
<svg style="left:0px;top:0px" width="1" height="1" viewBox="0 0 1 1"><path d="M925.5 542.5 H938.5 V554.5 H925.5 Z M929.5 542.5 V548.5 H935.5 V542.5" fill="none" stroke="#444" stroke-width="1"/></svg>
<svg style="left:0px;top:0px" width="1" height="1" viewBox="0 0 1 1"><path d="M958 548.5 H965.5 M1076 548.5 H1083.5 M1079.75 544.7 V552.3" stroke="#444" stroke-width="1.2"/><path d="M971 548.5 H1071" stroke="#a0a0a0" stroke-width="1"/></svg>
<div class="a" style="left:1019px;top:544px;width:5px;height:11px;background:#737373;"></div>
<span class="t" style="left:496.52px;top:8.50px;font-size:12px;line-height:18px;height:18px;color:#1e4a31;transform:scaleX(1.094);">検索</span>
<span class="t" style="left:22.16px;top:8.90px;font-size:12px;line-height:18px;height:18px;color:#fff;transform:scaleX(1.027);">自動保存</span>
<span class="t" style="left:97.50px;top:10.00px;font-size:10px;line-height:15px;height:15px;color:#fff;transform:scaleX(0.725);">オフ</span>
<span class="t" style="left:321.29px;top:7.50px;font-size:13px;line-height:20px;height:20px;color:#fff;transform:scaleX(0.998);">testABOM.xls</span>
<span class="t" style="left:12.64px;top:40.60px;font-size:13px;line-height:20px;height:20px;color:#444;transform:scaleX(0.763);">ファイル</span>
<span class="t" style="left:79.28px;top:40.60px;font-size:13px;line-height:20px;height:20px;color:#262626;font-weight:700;transform:scaleX(0.914);">ホーム</span>
<span class="t" style="left:140.92px;top:40.60px;font-size:13px;line-height:20px;height:20px;color:#444;transform:scaleX(1.055);">挿入</span>
<span class="t" style="left:193.54px;top:40.60px;font-size:13px;line-height:20px;height:20px;color:#444;transform:scaleX(1.049);">描画</span>
<span class="t" style="left:246.34px;top:40.60px;font-size:13px;line-height:20px;height:20px;color:#444;transform:scaleX(0.835);">ページ レイアウト</span>
<span class="t" style="left:363.77px;top:40.60px;font-size:13px;line-height:20px;height:20px;color:#444;transform:scaleX(1.046);">数式</span>
<span class="t" style="left:414.74px;top:40.60px;font-size:13px;line-height:20px;height:20px;color:#444;transform:scaleX(0.899);">データ</span>
<span class="t" style="left:475.80px;top:40.60px;font-size:13px;line-height:20px;height:20px;color:#444;transform:scaleX(1.056);">校閲</span>
<span class="t" style="left:526.84px;top:40.60px;font-size:13px;line-height:20px;height:20px;color:#444;transform:scaleX(1.065);">表示</span>
<span class="t" style="left:580.39px;top:40.60px;font-size:13px;line-height:20px;height:20px;color:#444;transform:scaleX(1.086);">開発</span>
<span class="t" style="left:633.01px;top:40.60px;font-size:13px;line-height:20px;height:20px;color:#444;transform:scaleX(0.864);">ヘルプ</span>
<span class="t" style="left:696.42px;top:40.60px;font-size:13px;line-height:20px;height:20px;color:#444;transform:scaleX(1.125);">Acrobat</span>
<span class="t" style="left:1018.62px;top:40.90px;font-size:13px;line-height:20px;height:20px;color:#217346;font-weight:700;transform:scaleX(1.008);">共有</span>
<span class="t" style="left:1085.00px;top:40.90px;font-size:13px;line-height:20px;height:20px;color:#217346;font-weight:700;transform:scaleX(0.839);">コメント</span>
<span class="t" style="left:11.80px;top:145.40px;font-size:12px;line-height:18px;height:18px;color:#444;transform:scaleX(0.729);">クリップボード</span>
<span class="t" style="left:211.40px;top:145.40px;font-size:12px;line-height:18px;height:18px;color:#444;transform:scaleX(0.744);">フォント</span>
<span class="t" style="left:439.56px;top:145.40px;font-size:12px;line-height:18px;height:18px;color:#444;transform:scaleX(1.066);">配置</span>
<span class="t" style="left:577.84px;top:145.40px;font-size:12px;line-height:18px;height:18px;color:#444;transform:scaleX(1.055);">数値</span>
<span class="t" style="left:711.42px;top:145.40px;font-size:12px;line-height:18px;height:18px;color:#444;transform:scaleX(0.787);">スタイル</span>
<span class="t" style="left:846.39px;top:145.40px;font-size:12px;line-height:18px;height:18px;color:#444;transform:scaleX(0.907);">セル</span>
<span class="t" style="left:965.90px;top:145.40px;font-size:12px;line-height:18px;height:18px;color:#444;transform:scaleX(1.067);">編集</span>
<span class="t" style="left:1066.01px;top:145.40px;font-size:12px;line-height:18px;height:18px;color:#444;transform:scaleX(0.801);">アイデア</span>
<span class="t" style="left:10.72px;top:105.10px;font-size:12px;line-height:18px;height:18px;color:#262626;transform:scaleX(0.898);">貼り付け</span>
<span class="t" style="left:112.28px;top:79.60px;font-size:12px;line-height:18px;height:18px;color:#262626;transform:scaleX(0.819);">游ゴシック</span>
<span class="t" style="left:286.00px;top:78.50px;font-size:13px;line-height:20px;height:20px;color:#262626;transform:scaleX(0.889);">11</span>
<span class="t" style="left:326.00px;top:74.00px;font-size:18px;line-height:27px;height:27px;color:#444;transform:scaleX(0.915);">A</span>
<span class="t" style="left:349.50px;top:78.50px;font-size:14px;line-height:21px;height:21px;color:#444;transform:scaleX(0.963);">A</span>
<span class="t" style="left:115.62px;top:109.00px;font-size:14px;line-height:21px;height:21px;color:#444;font-weight:700;transform:scaleX(0.994);">B</span>
<span class="t" style="left:139.30px;top:109.00px;font-size:14px;line-height:21px;height:21px;color:#444;font-style:italic;font-family:'Liberation Serif',serif;transform:scaleX(1.314);">I</span>
<span class="t" style="left:160.00px;top:109.00px;font-size:13px;line-height:20px;height:20px;color:#444;transform:scaleX(0.958);">U</span>
<span class="t" style="left:289.20px;top:105.40px;font-size:15.8px;line-height:24px;height:24px;color:#444;transform:scaleX(1.062);">A</span>
<span class="t" style="left:336.30px;top:110.20px;font-size:8px;line-height:12px;height:12px;color:#797775;transform:scaleX(0.962);">ア</span>
<span class="t" style="left:335.80px;top:119.20px;font-size:8px;line-height:12px;height:12px;color:#797775;transform:scaleX(1.075);">亜</span>
<span class="t" style="left:509.60px;top:77.10px;font-size:10px;line-height:15px;height:15px;color:#505050;transform:scaleX(1.043);">ab</span>
<span class="t" style="left:509.60px;top:84.80px;font-size:10px;line-height:15px;height:15px;color:#505050;transform:scaleX(0.960);">c</span>
<span class="t" style="left:560.89px;top:71.60px;font-size:12px;line-height:18px;height:18px;color:#262626;transform:scaleX(1.059);">標準</span>
<span class="t" style="left:598.50px;top:89.80px;font-size:19.5px;line-height:29px;height:29px;color:#505050;transform:scaleX(0.865);">%</span>
<span class="t" style="left:623.30px;top:70.40px;font-size:46px;line-height:40px;height:40px;color:#444;font-weight:700;font-family:'Liberation Serif',serif;transform:scaleX(0.930);">,</span>
<span class="t" style="left:570.00px;top:117.00px;font-size:9px;line-height:14px;height:14px;color:#444;transform:scaleX(0.865);">.0</span>
<span class="t" style="left:563.00px;top:124.50px;font-size:9px;line-height:14px;height:14px;color:#444;transform:scaleX(1.079);">.00</span>
<span class="t" style="left:586.00px;top:117.00px;font-size:9px;line-height:14px;height:14px;color:#444;transform:scaleX(0.999);">.00</span>
<span class="t" style="left:592.00px;top:124.50px;font-size:9px;line-height:14px;height:14px;color:#444;transform:scaleX(0.865);">.0</span>
<span class="t" style="left:675.52px;top:71.60px;font-size:12px;line-height:18px;height:18px;color:#262626;transform:scaleX(0.972);">条件付き書式</span>
<span class="t" style="left:675.79px;top:95.10px;font-size:12px;line-height:18px;height:18px;color:#262626;transform:scaleX(0.866);">テーブルとして書式設定</span>
<span class="t" style="left:676.73px;top:118.10px;font-size:12px;line-height:18px;height:18px;color:#262626;transform:scaleX(0.793);">セルのスタイル</span>
<span class="t" style="left:846.48px;top:71.60px;font-size:12px;line-height:18px;height:18px;color:#262626;transform:scaleX(1.010);">挿入</span>
<span class="t" style="left:845.00px;top:95.10px;font-size:12px;line-height:18px;height:18px;color:#262626;transform:scaleX(1.060);">削除</span>
<span class="t" style="left:844.94px;top:118.10px;font-size:12px;line-height:18px;height:18px;color:#262626;transform:scaleX(1.025);">書式</span>
<span class="t" style="left:962.60px;top:68.00px;font-size:16px;line-height:24px;height:24px;color:#2b88d8;transform:scaleX(1.031);">A</span>
<span class="t" style="left:963.00px;top:82.00px;font-size:16px;line-height:24px;height:24px;color:#444;transform:scaleX(0.981);">Z</span>
<span class="t" style="left:951.45px;top:105.10px;font-size:12.5px;line-height:19px;height:19px;color:#262626;transform:scaleX(0.835);">並べ替えと</span>
<span class="t" style="left:947.36px;top:119.60px;font-size:12.5px;line-height:19px;height:19px;color:#262626;transform:scaleX(0.727);">フィルター</span>
<span class="t" style="left:1015.26px;top:105.10px;font-size:12.5px;line-height:19px;height:19px;color:#262626;transform:scaleX(0.811);">検索と</span>
<span class="t" style="left:1009.72px;top:119.60px;font-size:12.5px;line-height:19px;height:19px;color:#262626;transform:scaleX(0.987);">選択</span>
<span class="t" style="left:1075.29px;top:105.10px;font-size:12.5px;line-height:19px;height:19px;color:#262626;transform:scaleX(0.843);">アイ</span>
<span class="t" style="left:1075.24px;top:119.60px;font-size:12.5px;line-height:19px;height:19px;color:#262626;transform:scaleX(0.819);">デア</span>
<span class="t" style="left:12.92px;top:179.80px;font-size:15px;line-height:22px;height:22px;color:#444;transform:scaleX(0.994);">A1</span>
<span class="t" style="left:223.50px;top:177.50px;font-size:14px;line-height:21px;height:21px;color:#444;font-weight:700;font-style:italic;font-family:'Liberation Serif',serif;transform:scaleX(1.177);">f</span>
<span class="t" style="left:229.30px;top:182.30px;font-size:10.5px;line-height:16px;height:16px;color:#444;font-weight:700;font-style:italic;font-family:'Liberation Serif',serif;transform:scaleX(1.143);">x</span>
<span class="t" style="left:263.12px;top:177.30px;font-size:14px;line-height:21px;height:21px;color:#555;transform:scaleX(1.080);">パーツ番号</span>
<span class="t" style="left:60.66px;top:214.60px;font-size:14.5px;line-height:22px;height:22px;color:#217346;">A</span>
<span class="t" style="left:132.66px;top:214.60px;font-size:14.5px;line-height:22px;height:22px;color:#444;">B</span>
<span class="t" style="left:204.26px;top:214.60px;font-size:14.5px;line-height:22px;height:22px;color:#444;">C</span>
<span class="t" style="left:276.26px;top:214.60px;font-size:14.5px;line-height:22px;height:22px;color:#444;">D</span>
<span class="t" style="left:348.66px;top:214.60px;font-size:14.5px;line-height:22px;height:22px;color:#444;">E</span>
<span class="t" style="left:421.07px;top:214.60px;font-size:14.5px;line-height:22px;height:22px;color:#444;">F</span>
<span class="t" style="left:491.86px;top:214.60px;font-size:14.5px;line-height:22px;height:22px;color:#444;">G</span>
<span class="t" style="left:564.26px;top:214.60px;font-size:14.5px;line-height:22px;height:22px;color:#444;">H</span>
<span class="t" style="left:639.48px;top:214.60px;font-size:14.5px;line-height:22px;height:22px;color:#444;">I</span>
<span class="t" style="left:709.88px;top:214.60px;font-size:14.5px;line-height:22px;height:22px;color:#444;">J</span>
<span class="t" style="left:780.66px;top:214.60px;font-size:14.5px;line-height:22px;height:22px;color:#444;">K</span>
<span class="t" style="left:853.46px;top:214.60px;font-size:14.5px;line-height:22px;height:22px;color:#444;">L</span>
<span class="t" style="left:923.45px;top:214.60px;font-size:14.5px;line-height:22px;height:22px;color:#444;">M</span>
<span class="t" style="left:996.26px;top:214.60px;font-size:14.5px;line-height:22px;height:22px;color:#444;">N</span>
<span class="t" style="left:1067.86px;top:214.60px;font-size:14.5px;line-height:22px;height:22px;color:#444;">O</span>
<span class="t" style="left:11.26px;top:239.50px;font-size:14.5px;line-height:22px;height:22px;color:#217346;">1</span>
<span class="t" style="left:11.26px;top:264.50px;font-size:14.5px;line-height:22px;height:22px;color:#444;">2</span>
<span class="t" style="left:11.26px;top:289.50px;font-size:14.5px;line-height:22px;height:22px;color:#444;">3</span>
<span class="t" style="left:11.26px;top:314.50px;font-size:14.5px;line-height:22px;height:22px;color:#444;">4</span>
<span class="t" style="left:11.26px;top:339.50px;font-size:14.5px;line-height:22px;height:22px;color:#444;">5</span>
<span class="t" style="left:11.26px;top:364.50px;font-size:14.5px;line-height:22px;height:22px;color:#444;">6</span>
<span class="t" style="left:11.26px;top:389.50px;font-size:14.5px;line-height:22px;height:22px;color:#444;">7</span>
<span class="t" style="left:11.26px;top:414.50px;font-size:14.5px;line-height:22px;height:22px;color:#444;">8</span>
<span class="t" style="left:11.26px;top:439.50px;font-size:14.5px;line-height:22px;height:22px;color:#444;">9</span>
<span class="t" style="left:7.23px;top:464.50px;font-size:14.5px;line-height:22px;height:22px;color:#444;">10</span>
<span class="t" style="left:7.77px;top:489.50px;font-size:14.5px;line-height:22px;height:22px;color:#444;">11</span>
<span class="t" style="left:176.09px;top:240.00px;font-size:14.67px;line-height:22px;height:22px;color:#000;font-weight:300;transform:scaleX(1.057);">数量</span>
<span class="t" style="left:248.88px;top:240.00px;font-size:14.67px;line-height:22px;height:22px;color:#000;font-weight:300;transform:scaleX(1.019);">説明</span>
<span class="t" style="left:319.67px;top:239.70px;font-size:15.3px;line-height:22px;height:22px;color:#2b2b2b;transform:scaleX(1.040);">price</span>
<span class="t" style="left:391.30px;top:240.00px;font-size:14.67px;line-height:22px;height:22px;color:#000;font-weight:300;transform:scaleX(1.024);">メーカー</span>
<span class="t" style="left:464.70px;top:240.00px;font-size:14.67px;line-height:22px;height:22px;color:#000;font-weight:300;transform:scaleX(1.034);">処理</span>
<span class="t" style="left:32.84px;top:264.70px;font-size:15.3px;line-height:22px;height:22px;color:#2b2b2b;transform:scaleX(1.005);">A-00</span>
<span class="t" style="left:234.98px;top:264.70px;font-size:15.3px;line-height:22px;height:22px;color:#2b2b2b;transform:scaleX(0.844);">1</span>
<span class="t" style="left:104.84px;top:289.70px;font-size:15.3px;line-height:22px;height:22px;color:#2b2b2b;transform:scaleX(1.018);">A-01</span>
<span class="t" style="left:234.98px;top:289.70px;font-size:15.3px;line-height:22px;height:22px;color:#2b2b2b;transform:scaleX(0.844);">1</span>
<span class="t" style="left:247.77px;top:289.70px;font-size:15.3px;line-height:22px;height:22px;color:#2b2b2b;transform:scaleX(0.945);">FP001</span>
<span class="t" style="left:371.67px;top:289.70px;font-size:15.3px;line-height:22px;height:22px;color:#2b2b2b;transform:scaleX(0.932);">30</span>
<span class="t" style="left:104.84px;top:314.70px;font-size:15.3px;line-height:22px;height:22px;color:#2b2b2b;transform:scaleX(1.019);">A-02</span>
<span class="t" style="left:234.98px;top:314.70px;font-size:15.3px;line-height:22px;height:22px;color:#2b2b2b;transform:scaleX(0.844);">1</span>
<span class="t" style="left:247.77px;top:314.70px;font-size:15.3px;line-height:22px;height:22px;color:#2b2b2b;transform:scaleX(0.946);">FP002</span>
<span class="t" style="left:371.71px;top:314.70px;font-size:15.3px;line-height:22px;height:22px;color:#2b2b2b;transform:scaleX(0.931);">20</span>
<span class="t" style="left:104.84px;top:339.70px;font-size:15.3px;line-height:22px;height:22px;color:#2b2b2b;transform:scaleX(1.020);">A-03</span>
<span class="t" style="left:234.98px;top:339.70px;font-size:15.3px;line-height:22px;height:22px;color:#2b2b2b;transform:scaleX(0.844);">1</span>
<span class="t" style="left:247.77px;top:339.70px;font-size:15.3px;line-height:22px;height:22px;color:#2b2b2b;transform:scaleX(0.946);">FP003</span>
<span class="t" style="left:370.58px;top:339.70px;font-size:15.3px;line-height:22px;height:22px;color:#2b2b2b;transform:scaleX(0.951);">10</span>
<span class="t" style="left:104.85px;top:364.70px;font-size:15.3px;line-height:22px;height:22px;color:#2b2b2b;transform:scaleX(0.998);">A-04</span>
<span class="t" style="left:232.99px;top:364.70px;font-size:15.3px;line-height:22px;height:22px;color:#2b2b2b;transform:scaleX(1.145);">4</span>
<span class="t" style="left:247.71px;top:364.70px;font-size:15.3px;line-height:22px;height:22px;color:#2b2b2b;transform:scaleX(1.005);">S6-12</span>
<span class="t" style="left:392.30px;top:290.00px;font-size:14.67px;line-height:22px;height:22px;color:#000;font-weight:300;transform:scaleX(1.022);"><span style="color:#2b2b2b">AAA</span>金属</span>
<span class="t" style="left:463.69px;top:290.00px;font-size:14.67px;line-height:22px;height:22px;color:#000;font-weight:300;transform:scaleX(1.036);">パーカ</span>
<span class="t" style="left:463.55px;top:315.00px;font-size:14.67px;line-height:22px;height:22px;color:#000;font-weight:300;transform:scaleX(1.029);">白アルマイト</span>
<span class="t" style="left:463.15px;top:340.00px;font-size:14.67px;line-height:22px;height:22px;color:#000;font-weight:300;transform:scaleX(1.022);">焼き入れ</span>
<span class="t" style="left:115.68px;top:513.50px;font-size:13px;line-height:20px;height:20px;color:#217346;transform:scaleX(1.070);">testABOM</span>
<span class="t" style="left:6.99px;top:540.50px;font-size:12px;line-height:18px;height:18px;color:#444;transform:scaleX(1.042);">準備完了</span>
<span class="t" style="left:764.94px;top:540.50px;font-size:12px;line-height:18px;height:18px;color:#444;transform:scaleX(1.019);">表示設定</span>
<span class="t" style="left:1096.20px;top:539.50px;font-size:13px;line-height:20px;height:20px;color:#444;transform:scaleX(1.028);">100%</span>
</body></html>
